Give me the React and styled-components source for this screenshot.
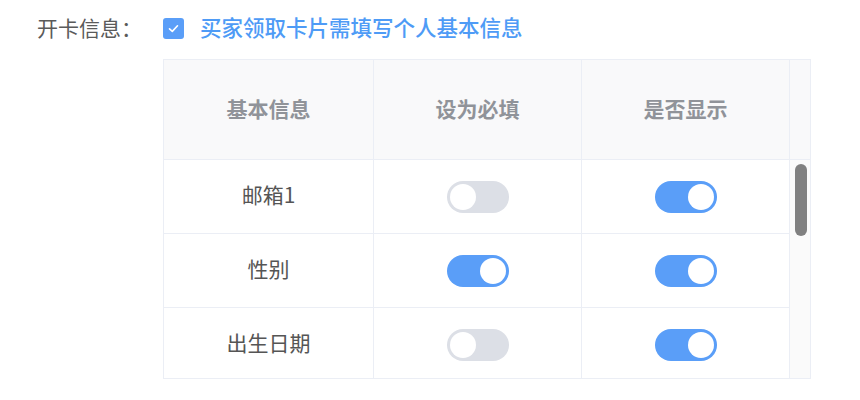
import React, { useRef, useState } from 'react';
import styled, { createGlobalStyle } from 'styled-components';

const GlobalStyle = createGlobalStyle`
  body {
    margin: 0;
    background: #fff;
    font-family: "Noto Sans CJK SC", "Noto Sans", sans-serif;
  }
`;

const Page = styled.div`
  padding: 14px 0 0 37px;
`;

const FormRow = styled.div`
  display: flex;
  align-items: center;
  height: 28px;
`;

const Label = styled.div`
  width: 126px;
  font-size: 21px;
  color: #5a5a5a;
  margin-top: -3px;
`;

const CheckLabel = styled.label`
  display: flex;
  align-items: center;
  gap: 16px;
  font-size: 21.5px;
  font-weight: 500;
  color: #4e9bf6;
  cursor: pointer;
`;

const CheckText = styled.span`
  margin-top: -3px;
`;

const Box = styled.span`
  width: 21px;
  height: 21px;
  border-radius: 3px;
  background: #5a9ef8;
  display: flex;
  align-items: center;
  justify-content: center;
`;

const Table = styled.div`
  margin: 17px 0 0 126px;
  width: 646px;
  border: 1px solid #ebeef5;
`;

const HeadRow = styled.div`
  display: grid;
  grid-template-columns: 209px 208px 208px 21px;
  height: 99px;
  background: #f9f9fa;
  border-bottom: 1px solid #ebeef5;
`;

const HeadCell = styled.div`
  display: flex;
  align-items: center;
  justify-content: center;
  font-size: 21px;
  font-weight: 700;
  color: #909399;
  padding-bottom: 4px;
  border-left: ${p => (p.$first ? 'none' : '1px solid #ebeef5')};
`;

const Body = styled.div`
  display: flex;
  height: 218px;
`;

const Rows = styled.div`
  width: 625px;
  overflow-y: scroll;
  scrollbar-width: none;

  &::-webkit-scrollbar {
    display: none;
  }
`;

const Gutter = styled.div`
  position: relative;
  width: 20px;
  background: #fafafa;
  border-left: 1px solid #ebeef5;
`;

const Thumb = styled.div`
  position: absolute;
  left: 5px;
  width: 12px;
  border-radius: 6px;
  background: #808080;
`;

const Row = styled.div`
  display: grid;
  grid-template-columns: 209px 208px 208px;
  height: 73px;
  border-bottom: 1px solid #ebeef5;
`;

const Cell = styled.div`
  display: flex;
  align-items: center;
  justify-content: center;
  font-size: 21px;
  color: #555;
  border-left: ${p => (p.$first ? 'none' : '1px solid #ebeef5')};
`;

const Name = styled.span`
  margin-top: -6px;
`;

const Track = styled.button`
  position: relative;
  width: 62px;
  height: 32px;
  padding: 0;
  border: none;
  border-radius: 16px;
  background: ${p => (p.$on ? '#5a9ef8' : '#dcdfe6')};
  cursor: pointer;
`;

const Knob = styled.span`
  position: absolute;
  top: 3px;
  left: ${p => (p.$on ? '33px' : '3px')};
  width: 26px;
  height: 26px;
  border-radius: 50%;
  background: #fff;
`;

const Switch = ({ on, onToggle }) => (
  <Track $on={on} onClick={onToggle}>
    <Knob $on={on} />
  </Track>
);

const initial = [
  { name: '邮箱1', required: false, show: true },
  { name: '性别', required: true, show: true },
  { name: '出生日期', required: false, show: true },
  { name: '地址', required: false, show: true },
  { name: '职业', required: false, show: false },
  { name: '学历', required: false, show: false },
  { name: '身高', required: false, show: false },
  { name: '体重', required: false, show: false },
  { name: '爱好', required: false, show: false },
];

const VIEW = 218;
const CONTENT = initial.length * 74;
const THUMB = 72;

export default function App() {
  const [rows, setRows] = useState(initial);
  const [scroll, setScroll] = useState(0);
  const ref = useRef(null);

  const toggle = (i, key) =>
    setRows(rs => rs.map((r, j) => (j === i ? { ...r, [key]: !r[key] } : r)));

  const maxScroll = CONTENT - VIEW;
  const thumbTop = 4 + (scroll / maxScroll) * (VIEW - THUMB - 8);

  return (
    <Page>
      <GlobalStyle />
      <FormRow>
        <Label>开卡信息：</Label>
        <CheckLabel>
          <Box>
            <svg width="13" height="13" viewBox="0 0 13 13">
              <path d="M2.5 6.8 L5.3 9.4 L10.5 3.8" fill="none" stroke="#fff" strokeWidth="1.6" strokeLinecap="round" strokeLinejoin="round" />
            </svg>
          </Box>
          <CheckText>买家领取卡片需填写个人基本信息</CheckText>
        </CheckLabel>
      </FormRow>
      <Table>
        <HeadRow>
          <HeadCell $first>基本信息</HeadCell>
          <HeadCell>设为必填</HeadCell>
          <HeadCell>是否显示</HeadCell>
          <HeadCell />
        </HeadRow>
        <Body>
          <Rows ref={ref} onScroll={e => setScroll(e.currentTarget.scrollTop)}>
            {rows.map((r, i) => (
              <Row key={r.name}>
                <Cell $first><Name>{r.name}</Name></Cell>
                <Cell>
                  <Switch on={r.required} onToggle={() => toggle(i, 'required')} />
                </Cell>
                <Cell>
                  <Switch on={r.show} onToggle={() => toggle(i, 'show')} />
                </Cell>
              </Row>
            ))}
          </Rows>
          <Gutter>
            <Thumb style={{ top: thumbTop, height: THUMB }} />
          </Gutter>
        </Body>
      </Table>
    </Page>
  );
}
